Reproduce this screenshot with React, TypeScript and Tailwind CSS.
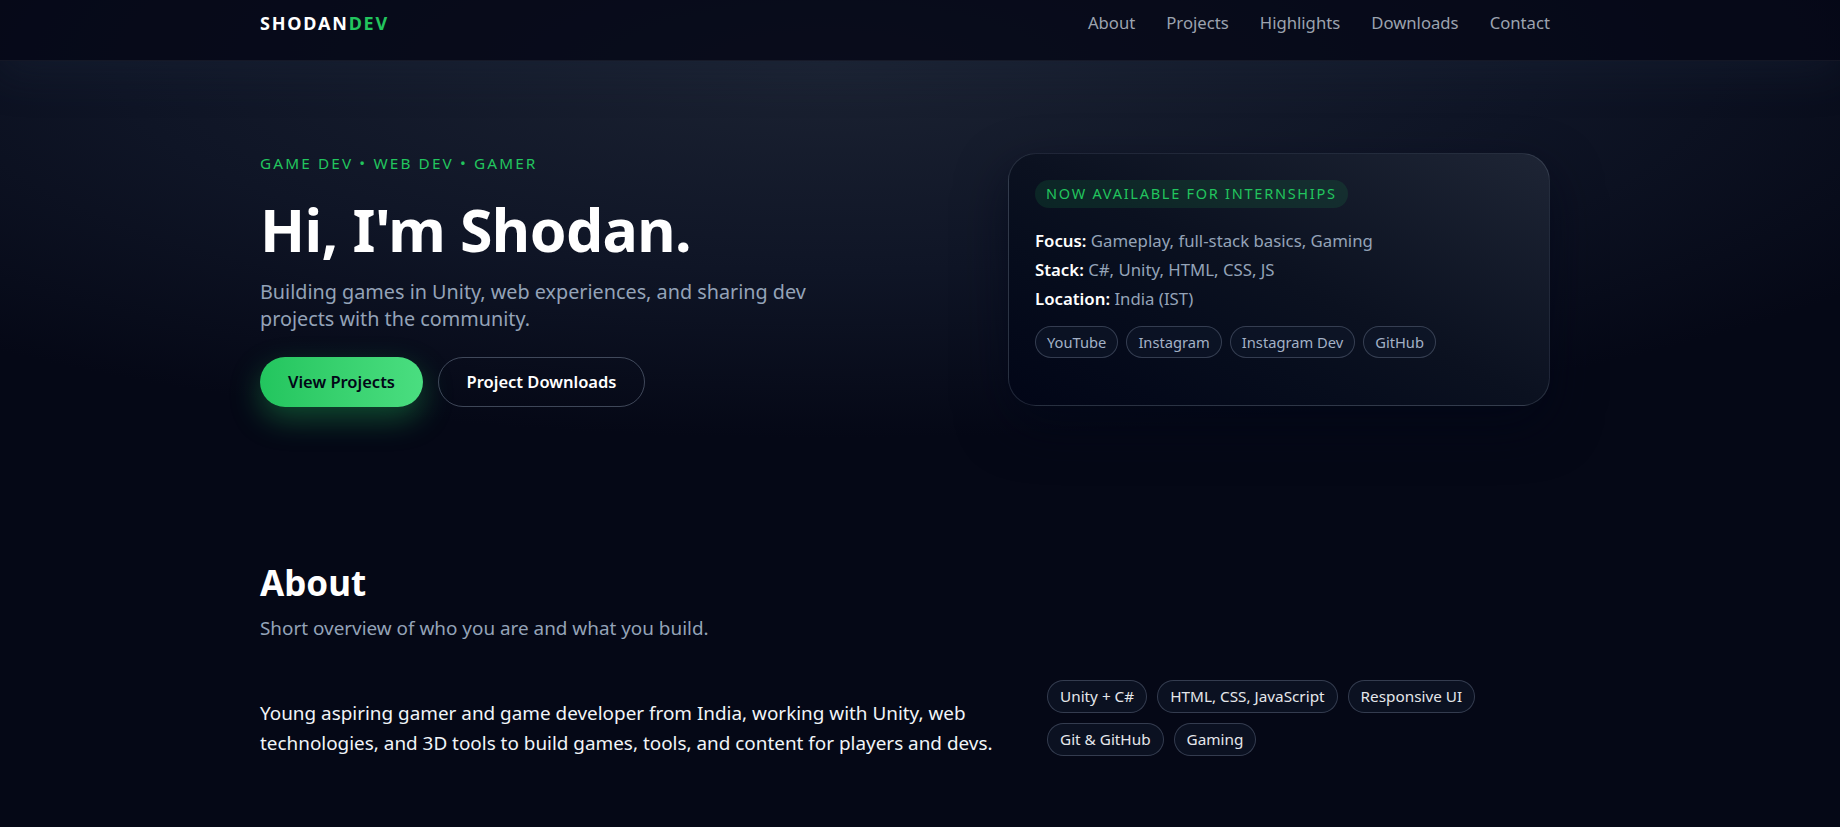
import React from "react";

const font = { fontFamily: '"Noto Sans", "Open Sans", sans-serif' };

export default function App() {
  const cardLinks = ["YouTube", "Instagram", "Instagram Dev", "GitHub"];
  const skills = ["Unity + C#", "HTML, CSS, JavaScript", "Responsive UI", "Git & GitHub", "Gaming"];

  return (
    <div
      className="min-h-screen text-white bg-[#050816] bg-[radial-gradient(ellipse_70%_45%_at_45%_8%,#1b2232_0%,#0f1526_55%,#050816_100%)]"
      style={font}
    >
      {/* Header */}
      <header className="h-[61px] border-b border-white/[0.06] bg-[#050816]/80 shadow-[0_12px_40px_rgba(30,41,59,0.35)]">
        <div className="ml-[260px] w-[1290px] pt-[11px] flex items-start justify-between leading-[24px]">
          <div className="text-[18px] font-bold tracking-[0.1em]">
            SHODAN<span className="text-[#22c55e]">DEV</span>
          </div>
          <nav className="flex items-center gap-[31px] text-[16.7px] text-[#9ca3af]">
            <a>About</a>
            <a>Projects</a>
            <a>Highlights</a>
            <a>Downloads</a>
            <a>Contact</a>
          </nav>
        </div>
      </header>

      <main className="ml-[260px] w-[1290px]">
        {/* Hero */}
        <section className="grid grid-cols-[minmax(0,1fr)_542px] gap-10 items-start pt-[90px]">
          <div>
            <p className="text-[15.3px] tracking-[0.14em] uppercase text-[#22c55e] leading-6">
              Game Dev • Web Dev • Gamer
            </p>
            <h1 className="mt-[22px] text-[59px] leading-[64px] font-bold tracking-[-0.01em]">
              Hi, I'm Shodan.
            </h1>
            <p className="mt-[17px] text-[19.8px] leading-[27px] text-[#94a3b8] max-w-[580px]">
              Building games in Unity, web experiences, and sharing dev projects with the community.
            </p>
            <div className="mt-[25px] flex gap-[15px]">
              <button className="h-[50px] w-[163px] rounded-full bg-gradient-to-r from-[#22c55e] to-[#4ade80] text-[#020617] text-[16.5px] font-semibold shadow-[0_12px_30px_rgba(34,197,94,0.35)]">
                View Projects
              </button>
              <button className="h-[50px] w-[207px] rounded-full border border-[#94a3b8]/40 text-white text-[16.5px] font-semibold">
                Project Downloads
              </button>
            </div>
          </div>

          <div className="mt-[2px] h-[253px] rounded-[28px] border border-[#94a3b8]/20 bg-gradient-to-tr from-[#020617] via-[#0b1120] to-[#1e2535] px-[26px] pt-[26px] shadow-[0_20px_50px_rgba(2,6,23,0.6)]">
            <span className="inline-flex items-center h-[28px] px-[11px] rounded-full bg-[#22c55e]/[0.12] text-[#22c55e] text-[14.5px] tracking-[0.12em] uppercase">
              Now available for internships
            </span>
            <div className="mt-[18px] text-[16.8px] leading-[29px] text-[#94a3b8]">
              <p><span className="font-semibold text-white">Focus:</span> Gameplay, full-stack basics, Gaming</p>
              <p><span className="font-semibold text-white">Stack:</span> C#, Unity, HTML, CSS, JS</p>
              <p><span className="font-semibold text-white">Location:</span> India (IST)</p>
            </div>
            <div className="mt-[13px] flex flex-wrap gap-[8px]">
              {cardLinks.map((l) => (
                <span
                  key={l}
                  className="h-[32px] px-[11px] inline-flex items-center rounded-full border border-[#94a3b8]/30 bg-[#0f172a]/60 text-[14.7px] text-[#a3b1c6]"
                >
                  {l}
                </span>
              ))}
            </div>
          </div>
        </section>

        {/* About */}
        <section className="pt-[155px] pb-16">
          <h2 className="text-[35px] leading-[42px] font-bold">About</h2>
          <p className="mt-[10px] text-[18.9px] leading-[28px] text-[#94a3b8]">
            Short overview of who you are and what you build.
          </p>
          <div className="mt-[38px] grid grid-cols-[minmax(0,1fr)_503px] gap-10">
            <p className="pt-[18px] text-[18.9px] leading-[30px] text-[#f1f5f9]">
              Young aspiring gamer and game developer from India, working with Unity, web technologies, and 3D tools to build games, tools, and content for players and devs.
            </p>
            <div className="flex flex-wrap gap-x-[10px] gap-y-[10px] content-start">
              {skills.map((s) => (
                <span
                  key={s}
                  className="h-[33px] px-[12px] inline-flex items-center rounded-full border border-[#94a3b8]/30 bg-[#0f172a]/60 text-[15.3px] text-[#e5e7eb]"
                >
                  {s}
                </span>
              ))}
            </div>
          </div>
        </section>
      </main>
    </div>
  );
}
